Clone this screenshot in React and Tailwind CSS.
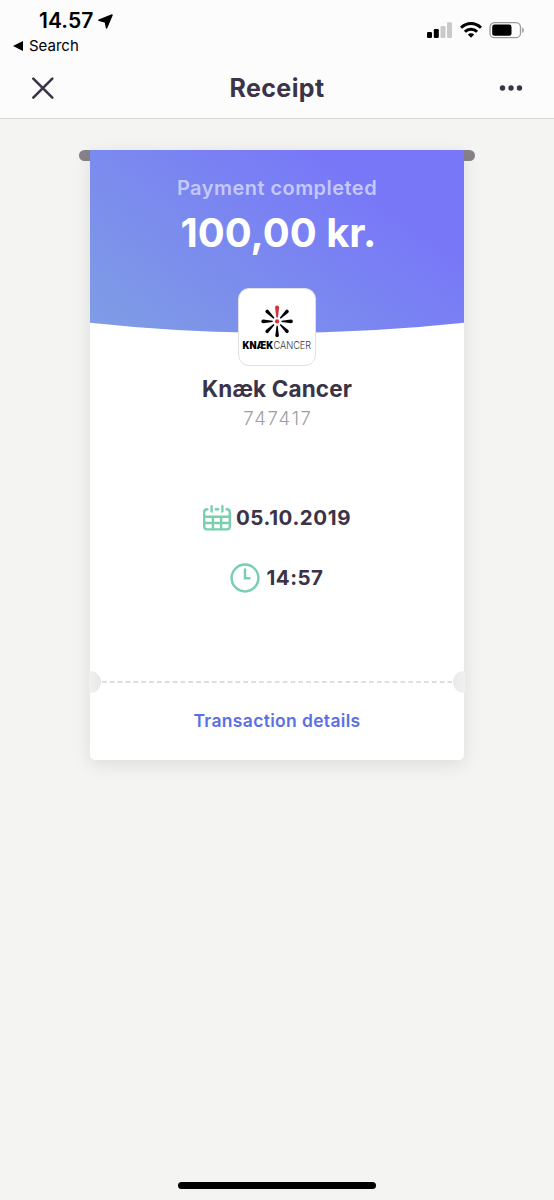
const rays = [45, 90, 135, 180, 225, 270, 315];

function StatusBar() {
  return (
    <div className="flex h-[57px] justify-between">
      <div className="pt-[7px] pl-[13px] font-['Inter','Liberation_Sans',sans-serif] text-black">
        <div className="flex h-[28px] items-center pl-[26px]">
          <span className="text-[21px] font-semibold leading-[28px] tracking-[0.1px]">14.57</span>
          <svg className="ml-[5px] h-[15px] w-[15px]" viewBox="0 0 15 15">
            <path d="M14 1 8.6 13.8 7.4 7.9 1 6.2Z" fill="#000" stroke="#000" strokeWidth="1.6" strokeLinejoin="round" />
          </svg>
        </div>
        <div className="flex h-[22px] items-center">
          <svg className="h-[10px] w-[10px]" viewBox="0 0 10 10">
            <path d="M0 5 10 0V10Z" fill="#000" />
          </svg>
          <span className="ml-[6px] text-[15px] leading-[22px]">Search</span>
        </div>
      </div>
      <div className="flex items-start pt-[21px] pr-[29px]">
        <svg className="mt-[1px] h-[16px] w-[25px]" viewBox="0 0 25 16">
          <rect x="0" y="10" width="5" height="6" rx="1.2" />
          <rect x="6.8" y="7" width="5" height="9" rx="1.2" />
          <rect x="13.5" y="4" width="5" height="12" rx="1.2" fill="#c9c9c9" />
          <rect x="20" y="0.3" width="5" height="15.7" rx="1.2" fill="#c9c9c9" />
        </svg>
        <svg className="mt-[1px] ml-[8px] h-[16px] w-[22px]" viewBox="0 0 22 16">
          <g fill="none" stroke="#000" strokeWidth="3">
            <path d="M1 5.8C6.7 .1 15.3 .1 21 5.8" />
            <path d="M4.9 9.7C8.3 6.3 13.7 6.3 17.1 9.7" />
          </g>
          <path d="M11 15.8 7.8 12.6C9.6 10.9 12.4 10.9 14.2 12.6Z" />
        </svg>
        <svg className="ml-[7px] h-[18px] w-[36px]" viewBox="0 0 36 18">
          <rect x="1" y="1.7" width="30.5" height="15" rx="4.5" fill="none" stroke="#9b9b9b" strokeWidth="1.3" />
          <rect x="3.2" y="3.6" width="19.3" height="11.2" rx="2.4" />
          <path d="M33.2 6.2C35.4 7.2 35.4 11 33.2 12Z" fill="#9b9b9b" />
        </svg>
      </div>
    </div>
  );
}

function Header() {
  return (
    <div className="grid h-[61px] grid-cols-3 items-center px-[31px]">
      <svg className="h-[24px] w-[24px]" viewBox="0 0 24 24" fill="none" stroke="#3b3347" strokeWidth="2.6" strokeLinecap="round">
        <path d="M2.3 2.7 21.3 21.7M21.3 2.7 2.3 21.7" />
      </svg>
      <h1 className="text-center text-[25px] font-bold leading-[30px] tracking-[0.4px]">Receipt</h1>
      <svg className="h-[6px] w-[24px] justify-self-end" viewBox="0 0 24 6" fill="#3b3347">
        <circle cx="3.5" cy="3" r="2.7" />
        <circle cx="12" cy="3" r="2.7" />
        <circle cx="20.5" cy="3" r="2.7" />
      </svg>
    </div>
  );
}

function Logo() {
  return (
    <div className="relative h-[78px] w-[78px] rounded-[11px] border border-[#e1e1e6] bg-white">
      <svg className="h-full w-full" viewBox="0 0 76 76">
        <g transform="translate(38.1 32.4)">
          {rays.map((angle) => (
            <path key={angle} d="M-.6-4.4-1.8-14A1.8 1.8 0 0 1 1.8-14L.6-4.4Z" transform={`rotate(${angle})`} />
          ))}
          <path d="M-.8-4-2-14A2 2 0 0 1 2-14L.8-4Z" fill="#d0343a" />
          <circle r="2.1" fill="#d0343a" />
        </g>
        <text x="3.6" y="60" fontFamily="Inter, sans-serif" fontSize="10" fontWeight="900" textLength="30.6" lengthAdjust="spacingAndGlyphs">KNÆK</text>
        <text x="34.4" y="60" fontFamily="Inter, sans-serif" fontSize="10" fontWeight="300" fill="#333" textLength="37.8" lengthAdjust="spacingAndGlyphs">CANCER</text>
      </svg>
    </div>
  );
}

function CalendarIcon() {
  return (
    <svg className="h-[26px] w-[28px]" viewBox="0 0 28 26" fill="none" stroke="#79cfae" strokeWidth="2.4" strokeLinecap="round">
      <path d="M4.4 4.3H4.1A2.9 2.9 0 0 0 1.2 7.2V21.5A2.9 2.9 0 0 0 4.1 24.4H23.9A2.9 2.9 0 0 0 26.8 21.5V7.2A2.9 2.9 0 0 0 23.9 4.3H23.6M12.8 4.3H15.2" />
      <path d="M8.6 1.3V6.6M19.4 1.3V6.6" />
      <path d="M1.5 11.8H26.5M1.5 18H26.5M9.9 12V24M18.1 12V24" />
    </svg>
  );
}

function ClockIcon() {
  return (
    <svg className="h-[30px] w-[30px]" viewBox="0 0 30 30" fill="none" stroke="#79cfae" strokeWidth="2.5" strokeLinecap="round">
      <circle cx="15" cy="15" r="13.4" />
      <path d="M15 6.6V15.2H19.4" />
    </svg>
  );
}

function Receipt() {
  return (
    <div className="relative mx-auto h-[610px] w-[374px]">
      {/* rail that the paper hangs from */}
      <div className="absolute top-0 -left-[11px] h-[11px] w-[396px] rounded-full bg-[#88838b]" />
      <div className="relative flex h-full flex-col items-center rounded-b-[5px] bg-white shadow-[0_4px_18px_rgba(0,0,0,0.10)]">
        <div className="relative flex h-[138px] w-full flex-col items-center text-center">
          <svg className="absolute top-0 left-0 h-[183px] w-full" viewBox="0 0 374 183" preserveAspectRatio="none">
            <defs>
              <linearGradient id="sky" gradientUnits="userSpaceOnUse" x1="20" y1="200" x2="190" y2="-30">
                <stop offset="0" stopColor="#7f9ee4" />
                <stop offset="0.5" stopColor="#7b8bee" />
                <stop offset="1" stopColor="#7877f8" />
              </linearGradient>
            </defs>
            <path d="M0 0H374V172.8Q187 193 0 172.8Z" fill="url(#sky)" />
          </svg>
          <p className="relative mt-[26px] text-[20px] font-semibold leading-[24px] tracking-[0.46px] text-[#c5c8fb]">Payment completed</p>
          <p className="relative mt-[9px] ml-[3px] text-[40px] font-bold leading-[48px] text-white">100,00 kr.</p>
        </div>
        <Logo />
        <h2 className="mt-[10px] text-[22.5px] font-bold leading-[26px] tracking-[0.15px]">Knæk Cancer</h2>
        <p className="mt-[4px] ml-[2px] text-[18.5px] font-light leading-[24px] tracking-[1.7px] text-[#9d9da5]">747417</p>
        <div className="mt-[75px] flex h-[26px] items-center gap-[5px]">
          <CalendarIcon />
          <span className="text-[20.5px] font-bold leading-[26px] tracking-[0.6px]">05.10.2019</span>
        </div>
        <div className="mt-[32px] flex h-[30px] items-center gap-[6px]">
          <ClockIcon />
          <span className="text-[20.5px] font-bold leading-[30px] tracking-[0.5px]">14:57</span>
        </div>
        <div className="mt-[78px] flex h-[22px] w-full items-center justify-between">
          <div className="relative -left-px h-[22px] w-[12px] rounded-r-full bg-linear-to-r from-[#f1f1f0] to-[#e7e7e7]" />
          <svg className="h-[2px] flex-1" viewBox="0 0 352 2" preserveAspectRatio="none">
            <path d="M0 1H352" stroke="#dedede" strokeWidth="2" strokeDasharray="4.7 3.2" />
          </svg>
          <div className="relative -right-px h-[22px] w-[12px] rounded-l-full bg-linear-to-r from-[#e9e9e9] to-[#f1f1f0]" />
        </div>
        <button className="mt-[17px] text-[17.5px] font-semibold leading-[22px] tracking-[0.33px] text-[#5c70e5]">Transaction details</button>
      </div>
    </div>
  );
}

export default function App() {
  return (
    <div className="flex h-[1200px] w-[554px] flex-col overflow-hidden bg-[#f4f4f3] font-['Inter','Liberation_Sans',sans-serif] text-[#3b3347]">
      <header className="h-[119px] border-b border-[#d8d8d9] bg-[#fcfcfc]">
        <StatusBar />
        <Header />
      </header>
      <main className="flex-1 pt-[31px]">
        <Receipt />
      </main>
      <div className="mx-auto mb-[11px] h-[7px] w-[198px] rounded-full bg-black" />
    </div>
  );
}
